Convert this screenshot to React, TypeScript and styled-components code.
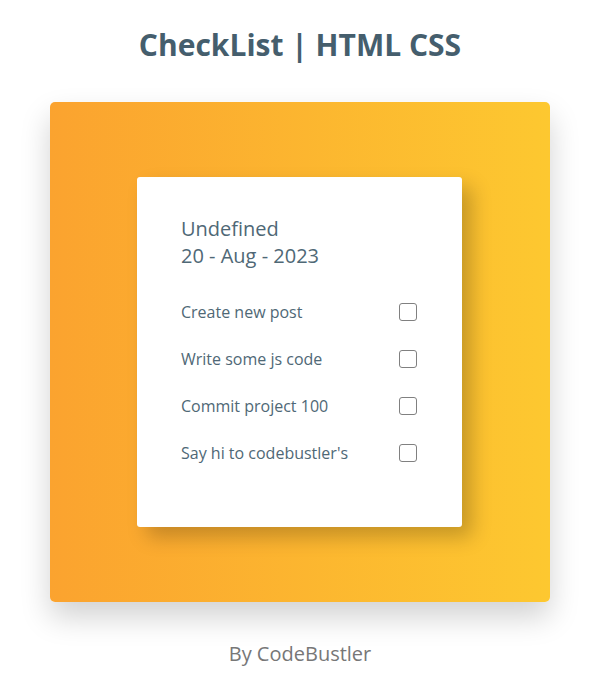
import React from "react";
import styled, { createGlobalStyle } from "styled-components";

const Global = createGlobalStyle`
  html, body { margin: 0; padding: 0; background: #ffffff; }
  body { font-family: "Open Sans", "Noto Sans", sans-serif; }
`;

const Page = styled.div`
  display: flex;
  flex-direction: column;
  align-items: center;
  padding-top: 23px;
  padding-right: 10px;
`;

const Title = styled.h1`
  margin: 0;
  font-size: 30px;
  line-height: 44px;
  font-weight: 700;
  color: #455e6d;
`;

const Stage = styled.div`
  margin-top: 35px;
  width: 500px;
  height: 500px;
  border-radius: 5px;
  background: linear-gradient(to right, #fba32f, #fdc830);
  box-shadow: 0 15px 30px rgba(0, 0, 0, 0.18);
  display: flex;
  align-items: center;
  justify-content: center;
`;

const Card = styled.div`
  width: 325px;
  height: 350px;
  box-sizing: border-box;
  margin-right: 1px;
  background: #ffffff;
  border-radius: 3px;
  box-shadow: 10px 10px 20px rgba(0, 0, 0, 0.22);
  padding: 38px 44px 0 44px;
  display: flex;
  flex-direction: column;
`;

const Heading = styled.div`
  font-size: 20px;
  line-height: 27px;
  color: #4f6876;
`;

const List = styled.ul`
  list-style: none;
  margin: 32px 0 0 0;
  padding: 0;
  display: flex;
  flex-direction: column;
  gap: 25px;
`;

const Item = styled.li`
  display: flex;
  align-items: center;
  justify-content: space-between;
  font-size: 16px;
  line-height: 22px;
  color: #4f6876;
`;

const Box = styled.span`
  width: 16px;
  height: 16px;
  border: 1px solid #808080;
  border-radius: 3px;
  margin-right: 1px;
`;

const Footer = styled.div`
  margin-top: 38px;
  font-size: 20px;
  line-height: 28px;
  color: #777777;
`;

const items = [
  "Create new post",
  "Write some js code",
  "Commit project 100",
  "Say hi to codebustler's",
];

export default function App() {
  return (
    <>
      <Global />
      <Page>
        <Title>CheckList | HTML CSS</Title>
        <Stage>
          <Card>
            <Heading>
              Undefined
              <br />
              20 - Aug - 2023
            </Heading>
            <List>
              {items.map((t) => (
                <Item key={t}>
                  {t}
                  <Box />
                </Item>
              ))}
            </List>
          </Card>
        </Stage>
        <Footer>By CodeBustler</Footer>
      </Page>
    </>
  );
}
